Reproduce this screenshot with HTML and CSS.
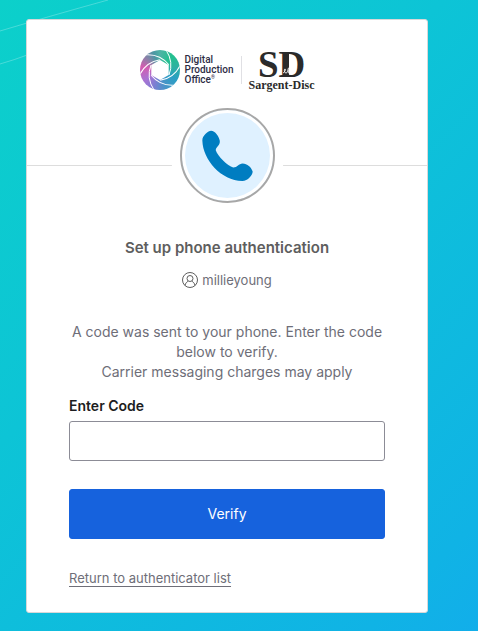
FILE: index.html
```html
<!DOCTYPE html>
<html lang="en">
<head>
<meta charset="utf-8">
<meta name="viewport" content="width=device-width, initial-scale=1">
<title>Set up phone authentication</title>
<link rel="stylesheet" href="styles.css">
</head>
<body>
<svg class="streaks" width="130" height="70" viewBox="0 0 130 70" aria-hidden="true">
  <path d="M0 31 Q50 16 108 0M0 64 Q14 60 30 54"/>
</svg>
<main class="card">
  <header class="card-header">
    <div class="brand">
      <div class="shutter">
        <svg width="40" height="40" viewBox="-20 -20 40 40" aria-hidden="true">
          <path class="hole" d="M0-10 8.700-5V5L0 10-8.700 5V-5Z"/>
          <g class="blades">
            <path id="blade" d="M9 5Q14-8 6-20"/>
            <use href="#blade" transform="rotate(60)"/>
            <use href="#blade" transform="rotate(120)"/>
            <use href="#blade" transform="rotate(180)"/>
            <use href="#blade" transform="rotate(240)"/>
            <use href="#blade" transform="rotate(300)"/>
          </g>
        </svg>
      </div>
      <div class="brand-name">Digital<br>Production<br>Office<span class="mark">®</span></div>
      <div class="partner">
        <svg width="48" height="29" viewBox="0 0 48 29" aria-hidden="true">
          <text class="monogram" x="0" y="27">SD</text>
          <path class="stem" d="M25 4h6v22h-6z"/>
          <path class="flourish" d="M25 23c2-1 3-4 2-4s-1 4 1 4 2-6 3-5-2 5 0 5"/>
        </svg>
        <span class="partner-name">Sargent-Disc</span>
      </div>
    </div>
    <div class="divider">
      <div class="badge">
        <svg width="51" height="51" viewBox="95 88 152 152" aria-hidden="true">
          <path d="M122 90C114 90 96 104 96 119C98 178 152 238 215 240C232 240 246 223 246 212C242 199 230 188 216 188C204 188 201 200 188 200C171 194 142 166 136 148C136 138 150 134 148 120C146 108 134 90 122 90Z"/>
        </svg>
      </div>
    </div>
  </header>
  <div class="content">
    <h1>Set up phone authentication</h1>
    <div class="user">
      <svg width="16" height="16" viewBox="0 0 16 16" aria-hidden="true">
        <circle cx="8" cy="8" r="7.500"/>
        <circle cx="8" cy="6.500" r="3"/>
        <path d="M3 13.500c.5-2.500 1.800-3.500 3.200-4.300M13 13.500c-.5-2.500-1.800-3.500-3.200-4.300"/>
      </svg>
      <span>millieyoung</span>
    </div>
    <form>
      <p>A code was sent to your phone. Enter the code below to verify.<br>Carrier messaging charges may apply</p>
      <label for="code">Enter Code</label>
      <input id="code" type="text" autocomplete="one-time-code">
      <button type="submit">Verify</button>
    </form>
    <a href="#">Return to authenticator list</a>
  </div>
</main>
</body>
</html>
```
FILE: styles.css
```css
* {
  box-sizing: border-box;
}

body {
  margin: 0;
  min-height: 100vh;
  padding: 19px 50px 18px 26px;
  background: linear-gradient(135deg, #0cd0ca 0%, #0dc4d6 40%, #10b3e5 90%, #12aeea 100%);
  font-family: Inter, "Liberation Sans", sans-serif;
  font-size: 14px;
  line-height: 20px;
  color: #6e6e78;
}

.streaks {
  position: absolute;
  top: 0;
  left: 0;
  fill: none;
  stroke: #fff;
  stroke-opacity: 0.25;
}

.card {
  position: relative;
  max-width: 402px;
  margin: 0 auto;
  background: #fff;
  border: 1px solid #d8d8d8;
  border-radius: 3px;
}

.card-header {
  padding-top: 30px;
}

.brand {
  display: flex;
  justify-content: center;
  height: 40px;
}

.shutter {
  width: 40px;
  height: 40px;
  border-radius: 50%;
  overflow: hidden;
  background: conic-gradient(#4fb3a5, #22c08e 40deg, #2db39f 75deg, #2a9fc4 120deg, #4a93c8 165deg, #7d7fd2 200deg, #a874d4 235deg, #d45cb0 280deg, #8d80a8 310deg, #4b98a3 340deg, #4fb3a5);
}

.shutter svg {
  display: block;
}

.hole {
  fill: #fff;
}

.blades {
  fill: none;
  stroke: #fff;
}

.brand-name {
  padding: 5px 7px 0 5px;
  font: 500 10px/10px Roboto, sans-serif;
  color: #2d2d45;
}

.mark {
  font-size: 5px;
  line-height: 5px;
  vertical-align: top;
}

.partner {
  display: flex;
  flex-direction: column;
  align-items: center;
  padding-left: 8px;
  background: linear-gradient(#e0e0e4, #e0e0e4) 0 6px / 1px 28px no-repeat;
}

.partner svg {
  overflow: visible;
}

.monogram {
  font: bold 37px "Liberation Serif", serif;
  fill: #2b2b2b;
}

.stem {
  fill: #2b2b2b;
}

.flourish {
  fill: none;
  stroke: #fff;
}

.partner-name {
  font: bold 12px/12px "Liberation Serif", serif;
  color: #2b2b2b;
}

.divider {
  display: flex;
  justify-content: center;
  margin-top: 18px;
  background: linear-gradient(#ddd, #ddd) 0 57px / 100% 1px no-repeat;
}

.badge {
  display: grid;
  place-items: center;
  width: 95px;
  height: 95px;
  border: 2px solid #a7a7a7;
  border-radius: 50%;
  background: #dff1ff;
  box-shadow: inset 0 0 0 3px #fff, 0 0 0 9px #fff;
}

.badge svg {
  fill: #007dc1;
}

.content {
  padding: 33px 42px 24px;
}

h1 {
  margin: 0;
  font-size: 15px;
  line-height: 24px;
  font-weight: 600;
  text-align: center;
  color: #5e5e5e;
}

.user {
  display: flex;
  justify-content: center;
  align-items: center;
  gap: 4px;
  margin-top: 10px;
  font-size: 13px;
}

.user svg {
  fill: none;
  stroke: #5e5e5e;
}

p {
  margin: 32px 0 16px;
  text-align: center;
}

label {
  display: block;
  line-height: 16px;
  font-weight: 600;
  color: #1d1d21;
}

input {
  display: block;
  width: 100%;
  height: 40px;
  margin-top: 7px;
  padding: 0 8px;
  border: 1px solid #8c8c96;
  border-radius: 3px;
  background: #fff;
  font: inherit;
}

button {
  display: block;
  width: 100%;
  height: 50px;
  margin: 28px 0 29px;
  border: 1px solid #1662dd;
  border-radius: 3px;
  background: #1662dd;
  font: inherit;
  color: #fff;
}

a {
  font-size: 13px;
  color: #6e6e78;
  text-underline-offset: 3px;
}
```
